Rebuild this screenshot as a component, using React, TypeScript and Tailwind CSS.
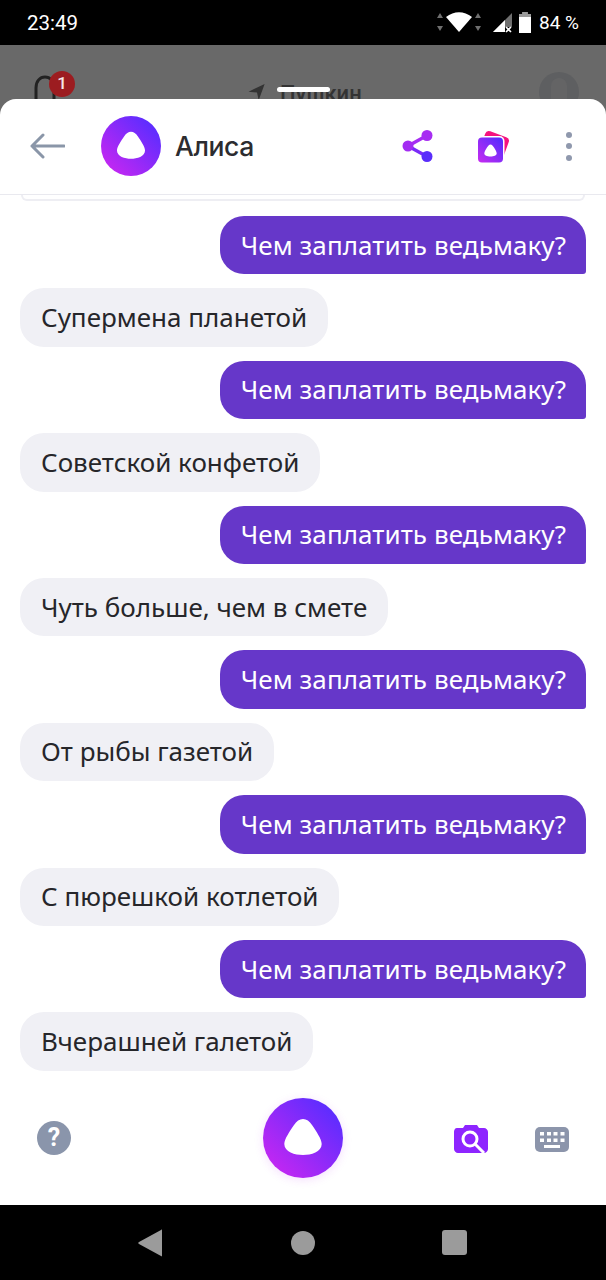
const messages = [
  "Супермена планетой",
  "Советской конфетой",
  "Чуть больше, чем в смете",
  "От рыбы газетой",
  "С пюрешкой котлетой",
  "Вчерашней галетой",
];

function AliceLogo({ size, id }: { size: number; id: string }) {
  return (
    <svg width={size} height={size} viewBox="0 0 80 80" className="shrink-0">
      <defs>
        <linearGradient id={id} x1="0.12" y1="0.88" x2="0.88" y2="0.12">
          <stop offset="0" stopColor="#c327f2" />
          <stop offset="1" stopColor="#5a2dff" />
        </linearGradient>
      </defs>
      <circle cx="40" cy="40" r="40" fill={`url(#${id})`} />
      <path
        d="M40 21C43.500 21 46.500 23 49 27C53 33 58.700 41 58.700 46C58.700 54 48 57 40 57C32 57 21.300 54 21.300 46C21.300 41 27 33 31 27C33.500 23 36.500 21 40 21Z"
        fill="#fff"
      />
    </svg>
  );
}

function StatusBar() {
  return (
    <div className="h-[45px] shrink-0 bg-black flex items-center justify-between pl-[27px] pr-[27px] text-white font-['Roboto',sans-serif]">
      <span className="text-[20.500px] mt-[2px]">23:49</span>
      <div className="flex items-center">
        <svg width="46" height="24" viewBox="0 0 46 24" className="mr-[11px]">
          <path d="M4 2L7 7H1ZM4 20L1 15H7Z" fill="#6f6f6f" />
          <path d="M10 6C18 -0.5 28 -0.5 36 6L23 21Z" fill="#fff" />
          <path d="M42 2L45 7H39ZM42 20L39 15H45Z" fill="#6f6f6f" />
        </svg>
        <svg width="19" height="20" viewBox="0 0 19 20" className="mr-[7px]">
          <path d="M19 0V14H12V19H0Z" fill="#6f6f6f" />
          <path d="M12 7V19H0L12 7Z" fill="#fff" />
          <path d="M13 14L18 19M18 14L13 19" stroke="#fff" strokeWidth="1.6" />
        </svg>
        <svg width="12" height="21" viewBox="0 0 12 21" className="mr-[8px]">
          <path d="M3.500 0H8.500V2H12V21H0V2H3.500Z" fill="#fff" />
          <path d="M3.500 0H8.500V2H12V5H0V2H3.500Z" fill="#9a9a9a" />
        </svg>
        <span className="text-[19px] mt-[2px]">84 %</span>
      </div>
    </div>
  );
}

function BackdropBar() {
  return (
    <div className="relative h-[54px] shrink-0 overflow-hidden bg-[#696969] flex pl-[33px] pr-[27px] pt-[28px] font-['Roboto',sans-serif]">
      <svg width="24" height="30" viewBox="0 0 24 30" className="mt-[1px] shrink-0">
        <path d="M3 28V14C3 7 7 3 12 3C17 3 21 7 21 14V28" fill="none" stroke="#222" strokeWidth="3" />
      </svg>
      <div className="ml-[191px] flex items-start gap-[14px]">
        <svg width="18" height="17" viewBox="0 0 20 20" className="mt-[11px]">
          <path d="M19 0L12 19L10 10L0 9Z" fill="#333" />
        </svg>
        <span className="text-[22px] leading-[26px] font-medium text-[#333] mt-[8px]">Пушкин</span>
      </div>
      <div className="ml-auto w-[40px] h-[40px] rounded-full bg-[#5e5f61] -mt-[1px] flex justify-center">
        <div className="w-[16px] h-[28px] rounded-full bg-[#696969] opacity-50 mt-[6px]" />
      </div>
      <div className="absolute left-[49px] top-[26px] w-[26px] h-[26px] rounded-full bg-[#9c1c20] flex items-center justify-center text-white/90 text-[17px] font-medium">
        1
      </div>
    </div>
  );
}

function Header() {
  return (
    <div className="h-[96px] shrink-0 flex items-center border-b border-[#e9e9ef] pl-[29px] pr-[34px] pb-[1px]">
      <svg width="36" height="28" viewBox="0 0 36 28" className="shrink-0">
        <path d="M35 14H3M14 3L3 14L14 25" fill="none" stroke="#8a96a8" strokeWidth="3" strokeLinecap="round" strokeLinejoin="round" />
      </svg>
      <div className="ml-[36px]">
        <AliceLogo size={60} id="alice-head" />
      </div>
      <span className="ml-[14px] mt-[2px] text-[26.500px] font-medium text-[#2c2c30] font-['Inter',sans-serif] tracking-[-0.4px]">Алиса</span>
      <svg width="32" height="34" viewBox="0 0 32 34" className="ml-auto">
        <path d="M25 6.500L6 17" fill="none" stroke="#a62df3" strokeWidth="3.400" />
        <path d="M6 17L25 27.500" fill="none" stroke="#7a2cf8" strokeWidth="3.400" />
        <circle cx="25" cy="6.500" r="5.500" fill="#a72df2" />
        <circle cx="6" cy="17" r="5.500" fill="#a32cf2" />
        <circle cx="25" cy="27.500" r="5.500" fill="#5a2dfb" />
      </svg>
      <svg width="38" height="36" viewBox="0 0 38 36" className="ml-[42px]">
        <defs>
          <linearGradient id="cards-grad" x1="0" y1="1" x2="1" y2="0">
            <stop offset="0" stopColor="#c82bf0" />
            <stop offset="1" stopColor="#4d2dff" />
          </linearGradient>
        </defs>
        <rect x="5.500" y="5.500" width="25" height="25" rx="4" fill="#f5137f" transform="rotate(20 18 18)" />
        <rect x="0.500" y="8" width="28" height="28" rx="5" fill="#fff" />
        <rect x="2" y="9.500" width="25" height="25" rx="4" fill="url(#cards-grad)" />
        <path d="M14.500 16.500C16 16.500 17 18 18 19.500C19.500 22 20.700 24 20.700 25.300C20.700 27.500 18 28.500 14.500 28.500C11 28.500 8.300 27.500 8.300 25.300C8.300 24 9.500 22 11 19.500C12 18 13 16.500 14.500 16.500Z" fill="#fff" />
      </svg>
      <div className="ml-[52px] flex flex-col gap-[5.500px]">
        <div className="w-[6px] h-[6px] rounded-full bg-[#8f98ad]" />
        <div className="w-[6px] h-[6px] rounded-full bg-[#8f98ad]" />
        <div className="w-[6px] h-[6px] rounded-full bg-[#8f98ad]" />
      </div>
    </div>
  );
}

function Chat() {
  return (
    <div className="flex-1 overflow-hidden">
      <div className="h-[6px] mx-[21px] border-x-2 border-b-2 border-[#eeeef3] rounded-b-[14px]" />
      <div className="flex flex-col gap-[14px] pt-[15px] px-[20px] text-[26px] font-['Noto_Sans',sans-serif]">
        {messages.map((reply) => (
          <div key={reply} className="flex flex-col gap-[14px]">
            <div className="self-end h-[58.4px] flex items-center pl-[21px] pr-[20px] rounded-[24px] rounded-br-[3px] bg-[#6637c9] text-white whitespace-nowrap tracking-[0.07px]">
              Чем заплатить ведьмаку?
            </div>
            <div className="self-start h-[58.4px] flex items-center px-[21px] rounded-[24px] bg-[#f0f0f5] text-[#26262a] whitespace-nowrap">
              {reply}
            </div>
          </div>
        ))}
      </div>
    </div>
  );
}

function Footer() {
  return (
    <div className="h-[134px] shrink-0 flex items-center pl-[37px] pr-[37px]">
      <div className="w-[34px] h-[34px] rounded-full bg-[#8a95ab] flex items-center justify-center text-white text-[25px] font-bold font-['Roboto',sans-serif]">
        ?
      </div>
      <div className="ml-[192px] rounded-full shadow-[0_2px_10px_rgba(190,50,240,0.15)]">
        <AliceLogo size={80} id="alice-mic" />
      </div>
      <svg width="36" height="30" viewBox="0 0 36 30" className="ml-[110px] mt-[2px]">
        <path d="M4 4H10L12 1H24L26 4H31C33 4 35 6 35 8V25C35 27 33 29 31 29H5C3 29 1 27 1 25V8C1 6 2 4 4 4Z" fill="#8e25ff" />
        <circle cx="17" cy="15" r="7" fill="#8e25ff" stroke="#fff" strokeWidth="3" />
        <path d="M22 20L31 29" stroke="#fff" strokeWidth="3" />
      </svg>
      <svg width="34" height="26" viewBox="0 0 34 26" className="ml-[46px] mt-[4px]">
        <rect x="0" y="0" width="34" height="25" rx="5" fill="#8c95ab" />
        <path d="M5 5H9V8.500H5ZM12 5H16V8.500H12ZM18.500 5H22.500V8.500H18.500ZM25.500 5H29.500V8.500H25.500ZM5 11.500H9V15H5ZM12 11.500H16V15H12ZM18.500 11.500H22.500V15H18.500ZM25.500 11.500H29.500V15H25.500ZM9 18H25V21H9Z" fill="#fff" />
      </svg>
    </div>
  );
}

function NavBar() {
  return (
    <div className="h-[75px] shrink-0 bg-black flex items-center pl-[138px]">
      <svg width="24" height="28" viewBox="0 0 24 28">
        <path d="M23 1C24 0 24 1 24 2V26C24 27 24 28 23 27L1 15C0 14.500 0 13.500 1 13Z" fill="#9b9b9b" />
      </svg>
      <div className="ml-[129px] w-[24px] h-[24px] rounded-full bg-[#9b9b9b]" />
      <div className="ml-[127px] w-[25px] h-[25px] rounded-[3px] bg-[#9b9b9b]" />
    </div>
  );
}

export default function App() {
  return (
    <div className="w-[606px] h-[1280px] flex flex-col overflow-hidden bg-[#696969]">
      <StatusBar />
      <BackdropBar />
      <div className="relative flex-1 min-h-0 flex flex-col bg-white rounded-t-[16px]">
        <div className="absolute left-[277px] -top-[12px] w-[53px] h-[5px] rounded-full bg-white" />
        <Header />
        <Chat />
        <Footer />
      </div>
      <NavBar />
    </div>
  );
}
